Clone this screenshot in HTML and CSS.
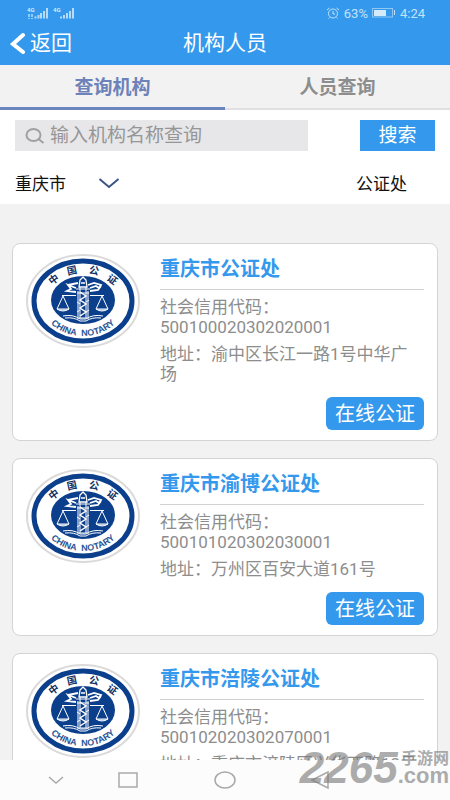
FILE: index.html
```html
<!DOCTYPE html>
<html lang="zh-CN">
<head>
    <meta charset="UTF-8">
    <meta name="viewport" content="width=device-width, initial-scale=1.0">
    <title>机构人员</title>
    <link rel="stylesheet" href="styles.css">
</head>
<body>
    <!-- shared emblem -->
    <svg class="defs" width="0" height="0" aria-hidden="true">
        <symbol id="emblem" viewBox="0 0 114 94">
            <ellipse cx="57" cy="47" rx="56" ry="46" fill="#fff" stroke="#dcd9d9" stroke-width="2"/>
            <ellipse cx="57" cy="47" rx="49" ry="40" fill="#fff" stroke="#0b3f8c" stroke-width="5"/>
            <ellipse cx="57" cy="46" rx="32" ry="24" fill="#0b3f8c"/>
            <path id="arcBottom" d="M15 47 A42 35 0 0 0 99 47" fill="none"/>
            <g class="emblem-cn" text-anchor="middle">
                <text transform="translate(28 26) rotate(-36)" y="3">中</text>
                <text transform="translate(46 17) rotate(-12)" y="3">国</text>
                <text transform="translate(68 17) rotate(12)" y="3">公</text>
                <text transform="translate(86 26) rotate(36)" y="3">证</text>
            </g>
            <text class="emblem-en" text-anchor="middle"><textPath href="#arcBottom" startOffset="50%">CHINA&#160; NOTARY</textPath></text>
            <g fill="none" stroke="#fff" stroke-width="1">
                <path d="M36 41.500H50 M64 41.500H78 M37 42L31 55 M37 42L43 55 M76 42L70 55 M76 42L82 55"/>
                <path d="M31 55Q37 59 43 55Z M70 55Q76 59 82 55Z" fill="#8fa9cf"/>
                <path d="M52 37V63 M62 37V63 M54 33V64 M60 33V64"/>
                <path d="M54 38l6 4-6 4 6 4-6 4 6 4-6 4" stroke-width="1.500"/>
                <path d="M50 35H64 M51 39H63 M51 64H63 M51 48l3 2 M63 46l-3 2 M51 58l3-2 M63 56l-3 2"/>
                <path d="M53 33L54 26L57 23L60 26L61 33Z M55 29H59" stroke-width="1.300"/>
                <path d="M50 34L42 31L45 35L41 37L50 38 M42 31L52 29 M64 34L70 32L73 34L75 31L68 29L62 31 M64 37L72 36L75 32" stroke-width="1.800"/>
                <path d="M37 62Q47 60 54 65H60Q67 60 77 62 M39 64Q48 63 54 67H60Q66 63 75 64"/>
            </g>
        </symbol>
    </svg>

    <header class="header">
        <div class="status">
            <svg class="signals" viewBox="0 0 48 16" width="48" height="16" aria-hidden="true">
                <g class="net">
                    <text x="0" y="7">4G</text>
                    <text x="26" y="7">4G</text>
                </g>
                <path class="data" d="M2 9v5M5 9v5"/>
                <path d="M8.500 11.500v2M11.500 10v3.500M14 8v5.500M17 6v7.500M20 3v10.500M34 11.500v2M37 10v3.500M40 8v5.500M43 6v7.500M46 3v10.500"/>
            </svg>
            <div class="status-right">
                <svg viewBox="0 0 14 12" width="14" height="12" fill="none" stroke="#c3e2fa" aria-hidden="true">
                    <circle cx="7" cy="6.500" r="4.500"/>
                    <path d="M7 4v3h2M1 3l2.500-2M13 3l-2.500-2M3.500 10.500L2.500 11.500M10.500 10.500L11.500 11.500"/>
                </svg>
                <span class="battery">63%</span>
                <svg viewBox="0 0 24 10" width="24" height="10" aria-hidden="true">
                    <rect x=".5" y=".5" width="20" height="8.500" fill="none" stroke="#8fc6f4"/>
                    <rect x="2" y="2" width="12" height="6" fill="#d3eafb"/>
                    <path d="M22.500 2v5" stroke="#c3e2fa"/>
                </svg>
                <span class="time">4:24</span>
            </div>
        </div>
        <div class="titlebar">
            <button class="back" type="button">
                <svg viewBox="0 0 16 22" width="16" height="22" aria-hidden="true"><path d="M13 3L3 12l10 8" fill="none" stroke="#fff" stroke-width="4" stroke-linecap="round"/></svg>
                返回
            </button>
            <h1>机构人员</h1>
        </div>
    </header>

    <nav class="tabs">
        <button class="tab active" type="button">查询机构</button>
        <button class="tab" type="button">人员查询</button>
    </nav>

    <section class="filters">
        <form class="search">
            <label class="search-box">
                <svg viewBox="0 0 20 17" width="20" height="17" fill="none" stroke="#a0a0a2" stroke-width="2" aria-hidden="true"><ellipse cx="8.500" cy="8" rx="7" ry="6"/><path d="M13.500 12l5 4"/></svg>
                <input type="text" placeholder="输入机构名称查询" aria-label="输入机构名称查询">
            </label>
            <button class="search-btn" type="button">搜索</button>
        </form>
        <div class="pickers">
            <button class="city" type="button">
                重庆市
                <svg viewBox="0 0 22 12" width="22" height="12" aria-hidden="true"><path d="M1.500 2L11 10l9.500-8" fill="none" stroke="#3b5488" stroke-width="2"/></svg>
            </button>
            <span class="kind">公证处</span>
        </div>
    </section>

    <main class="list">
        <article class="card">
            <svg class="logo" viewBox="0 0 114 94"><use href="#emblem"/></svg>
            <div class="info">
                <h2>重庆市公证处</h2>
                <p>社会信用代码：500100020302020001</p>
                <p>地址：渝中区长江一路1号中华广场</p>
                <button class="online" type="button">在线公证</button>
            </div>
        </article>
        <article class="card">
            <svg class="logo" viewBox="0 0 114 94"><use href="#emblem"/></svg>
            <div class="info">
                <h2>重庆市渝博公证处</h2>
                <p>社会信用代码：500101020302030001</p>
                <p>地址：万州区百安大道161号</p>
                <button class="online" type="button">在线公证</button>
            </div>
        </article>
        <article class="card">
            <svg class="logo" viewBox="0 0 114 94"><use href="#emblem"/></svg>
            <div class="info">
                <h2>重庆市涪陵公证处</h2>
                <p>社会信用代码：500102020302070001</p>
                <p>地址：重庆市涪陵区兴华西路13号</p>
                <button class="online" type="button">在线公证</button>
            </div>
        </article>
    </main>

    <footer class="sysnav">
        <button type="button" aria-label="收起"><svg viewBox="0 0 20 20" width="20" height="20"><path d="M3 7l7 6 7-6"/></svg></button>
        <button type="button" aria-label="任务"><svg viewBox="0 0 20 20" width="20" height="20"><rect x="1" y="3" width="18" height="14"/></svg></button>
        <button type="button" aria-label="主页"><svg viewBox="0 0 22 20" width="22" height="20"><ellipse cx="11" cy="10" rx="10" ry="8"/></svg></button>
        <button type="button" aria-label="返回"><svg viewBox="0 0 20 20" width="20" height="20"><path d="M18 2v16L2 10z"/></svg></button>
    </footer>

    <div class="watermark">
        <span class="mark-num">2265</span>
        <span class="mark-side"><span class="mark-cn">手游网</span><span class="mark-com">.com</span></span>
    </div>
</body>
</html>
```

FILE: styles.css
```css
* {
    box-sizing: border-box;
}

body {
    display: flex;
    flex-direction: column;
    height: 100vh;
    margin: 0;
    overflow: hidden;
    position: relative;
    background: #f2f2f2;
    font-family: Roboto, "Noto Sans CJK SC", sans-serif;
    font-size: 17px;
    color: #111;
}

button {
    border: 0;
    padding: 0;
    background: none;
    font: inherit;
    color: inherit;
    cursor: pointer;
}

h1, h2, p {
    margin: 0;
}

.defs {
    position: absolute;
}

/* header */
.header {
    flex: none;
    background: #3499ed;
    color: #fff;
}

.status {
    display: flex;
    justify-content: space-between;
    align-items: center;
    height: 26px;
    padding: 0 25px 0 27px;
    color: #c3e2fa;
}

.signals {
    overflow: visible;
}

.signals path {
    fill: none;
    stroke: #b4dbf9;
    stroke-width: 2;
}

.signals .data {
    stroke-width: 1.5;
    stroke-dasharray: 3 1;
}

.net {
    font-size: 6px;
    font-weight: 700;
    fill: #d3eafb;
}

.status-right {
    display: flex;
    align-items: center;
    gap: 4px;
    font-size: 13px;
}

.titlebar {
    display: grid;
    grid-template-columns: 1fr auto 1fr;
    align-items: center;
    height: 39px;
    padding: 0 10px 6px;
}

.back {
    display: flex;
    align-items: center;
    gap: 4px;
    font-size: 21px;
    line-height: 32px;
}

h1 {
    font-size: 21px;
    font-weight: 400;
    line-height: 32px;
}

/* tabs */
.tabs {
    display: flex;
    flex: none;
    height: 45px;
}

.tab {
    flex: 1;
    border-bottom: 2px solid #e0e0e2;
    padding-bottom: 2px;
    font-size: 19px;
    font-weight: 700;
    color: #8d8d8d;
}

.tab.active {
    border-bottom: 3px solid #6b86bf;
    color: #6d82b8;
}

/* search */
.filters {
    flex: none;
    padding: 10px 15px 0;
    background: #fff;
}

.search {
    display: flex;
    justify-content: space-between;
    gap: 52px;
}

.search-box {
    display: flex;
    flex: 1;
    align-items: center;
    gap: 5px;
    height: 31px;
    padding-left: 10px;
    background: #e7e7e9;
}

.search-box input {
    flex: 1;
    min-width: 0;
    border: 0;
    padding: 0;
    background: none;
    font: inherit;
    font-size: 19px;
    line-height: 28px;
    outline: none;
}

.search-box input::placeholder {
    color: #969698;
}

.search-btn {
    width: 75px;
    height: 31px;
    background: #3499ed;
    font-size: 19px;
    line-height: 28px;
    color: #fff;
}

.pickers {
    display: flex;
    justify-content: space-between;
    align-items: center;
    height: 53px;
    padding: 10px 28px 0 0;
}

.city {
    display: flex;
    align-items: center;
    gap: 32px;
}

/* cards */
.list {
    display: flex;
    flex: 1;
    flex-direction: column;
    gap: 17px;
    min-height: 0;
    overflow: hidden;
    padding: 39px 12px 0;
}

.card {
    display: flex;
    flex: none;
    gap: 20px;
    border: 1px solid #d4d4d4;
    border-radius: 8px;
    padding: 10px 13px;
    background: #fff;
}

.logo {
    flex: none;
    width: 114px;
    height: 94px;
}

.info {
    display: flex;
    flex: 1;
    flex-direction: column;
    min-width: 0;
}

.info h2 {
    border-bottom: 1px solid #d2d2d2;
    margin-bottom: 7px;
    padding-bottom: 5px;
    font-size: 20px;
    font-weight: 700;
    line-height: 30px;
    color: #3499ed;
}

.info p {
    margin-bottom: 7px;
    line-height: 20px;
    color: #8d8d8d;
    overflow-wrap: anywhere;
}

.online {
    align-self: flex-end;
    height: 33px;
    margin-top: 6px;
    border-radius: 6px;
    padding: 0 9px;
    background: #3499ed;
    font-size: 20px;
    line-height: 30px;
    color: #fff;
}

/* emblem text */
.emblem-cn {
    font-size: 10px;
    font-weight: 700;
    fill: #12305f;
}

.emblem-en {
    font-family: "Liberation Sans", sans-serif;
    font-size: 9px;
    font-weight: 700;
    fill: #2a5596;
}

/* system bar */
.sysnav {
    display: grid;
    flex: none;
    grid-template-columns: 72fr 72fr 122fr 68fr 96fr;
    align-items: center;
    justify-items: center;
    height: 40px;
    padding-left: 20px;
    background: #fcfcfc;
}

.sysnav svg {
    display: block;
    fill: none;
    stroke: #a9a9a9;
    stroke-width: 1.5;
}

.watermark {
    display: flex;
    position: absolute;
    right: 1px;
    bottom: 14px;
    align-items: flex-end;
    color: #777;
    opacity: .6;
    pointer-events: none;
}

.mark-num {
    font-family: "Liberation Sans", sans-serif;
    font-size: 44px;
    font-style: italic;
    font-weight: 700;
    line-height: 36px;
}

.mark-side {
    display: flex;
    flex-direction: column;
    align-items: flex-end;
}

.mark-cn {
    font-size: 16px;
    font-weight: 700;
    line-height: 14px;
}

.mark-com {
    font-family: "Liberation Sans", sans-serif;
    font-size: 22px;
    font-weight: 700;
    line-height: 20px;
}
```
